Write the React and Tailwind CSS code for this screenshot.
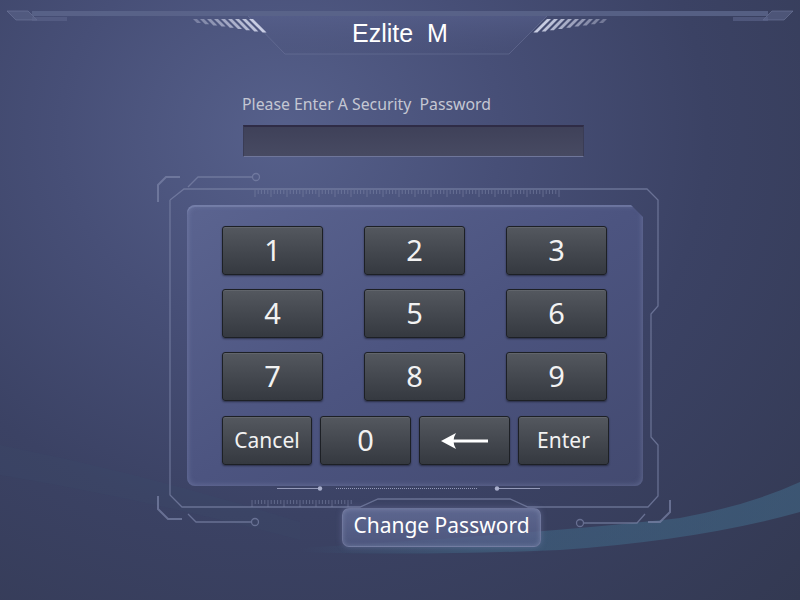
import React from 'react';

const digits = ['1', '2', '3', '4', '5', '6', '7', '8', '9'];

function Key({ children, className = '' }) {
    return (
        <button
            className={`flex items-center justify-center rounded-[3px] border border-[#1d2025] bg-gradient-to-b from-[#54585f] to-[#353940] text-[#f2f2f2] shadow-[0_1px_2px_rgba(0,0,0,0.45),inset_0_1px_0_rgba(255,255,255,0.08)] ${className}`}
        >
            {children}
        </button>
    );
}

function ArrowLeft() {
    return (
        <svg width="48" height="16" viewBox="0 0 48 16">
            <path d="M10 8 H47" stroke="#fff" strokeWidth="3" />
            <path d="M0 8 L15 0 Q10 8 15 16 Z" fill="#fff" />
        </svg>
    );
}

function Ticks({ x, y, count, step = 3.2 }) {
    const out = [];
    for (let i = 0; i < count; i++) {
        const big = i % 5 === 0;
        out.push(
            <line
                key={i}
                x1={x + i * step}
                x2={x + i * step}
                y1={y}
                y2={y + (big ? 7 : 4)}
                stroke="#8088aa"
                strokeOpacity="0.55"
                strokeWidth="1"
            />
        );
    }
    return <g>{out}</g>;
}

function Decorations() {
    const line = '#7c84a8';
    const hatch = [];
    for (let y = 330; y < 421; y += 3) {
        hatch.push(<line key={y} x1="638" y1={y + 2} x2="642" y2={y} stroke="#c8cce0" strokeWidth="1.2" />);
    }
    const stripesL = [];
    const stripesR = [];
    for (let i = 0; i < 9; i++) {
        const h = 4 + i * 1.2;
        const x = 193 + i * 7;
        const op = 0.35 + i * 0.07;
        stripesL.push(
            <polygon key={i} points={`${x},19 ${x + 4},19 ${x + 4 + h},${19 + h} ${x + h},${19 + h}`} fill="#d4d8ec" fillOpacity={op} />
        );
        const xr = 607 - i * 7;
        stripesR.push(
            <polygon key={i} points={`${xr},19 ${xr - 4},19 ${xr - 4 - h},${19 + h} ${xr - h},${19 + h}`} fill="#d4d8ec" fillOpacity={op} />
        );
    }
    return (
        <svg className="absolute inset-0" width="800" height="600" viewBox="0 0 800 600">
            <defs>
                <linearGradient id="cap" x1="0" y1="0" x2="0" y2="1">
                    <stop offset="0" stopColor="#5a6390" stopOpacity="0.55" />
                    <stop offset="1" stopColor="#4a5279" stopOpacity="0.25" />
                </linearGradient>
                <linearGradient id="wave" x1="0" y1="0" x2="1" y2="0">
                    <stop offset="0" stopColor="#3f6d8a" stopOpacity="0" />
                    <stop offset="0.35" stopColor="#3f6d8a" stopOpacity="0.45" />
                    <stop offset="1" stopColor="#43708f" stopOpacity="0.5" />
                </linearGradient>
            </defs>

            {/* header */}
            <polygon points="7,11 28,11 37,20 16,20" fill="#5b6489" fillOpacity="0.6" stroke="#7a82a6" strokeOpacity="0.5" />
            <polygon points="793,11 772,11 763,20 784,20" fill="#5b6489" fillOpacity="0.6" stroke="#7a82a6" strokeOpacity="0.5" />
            <rect x="32" y="11" width="736" height="5" fill="#5d668c" fillOpacity="0.8" />
            <rect x="32" y="17" width="35" height="4" fill="#5d668c" fillOpacity="0.6" />
            <rect x="733" y="17" width="35" height="4" fill="#5d668c" fillOpacity="0.6" />
            <polygon points="248,16 285,54 509,54 547,16" fill="url(#cap)" />
            <polyline points="248,16 285,54 509,54 547,16" fill="none" stroke="#7a82a8" strokeOpacity="0.4" />
            {stripesL}
            {stripesR}

            {/* wave */}
            <path d="M300 548 Q 560 532 680 518 Q 750 505 800 482 L 800 512 Q 700 540 560 550 Q 420 556 300 552 Z" fill="url(#wave)" />
            <path d="M0 445 Q 150 475 300 522 L 300 540 Q 150 500 0 475 Z" fill="#3f6d8a" fillOpacity="0.05" />

            {/* keypad frame */}
            <g fill="none" stroke={line} strokeOpacity="0.7" strokeWidth="1.3">
                <polyline points="158,202 158,185 166,177 180,177" strokeWidth="2" />
                <polyline points="188,187 198,177 252,177" />
                <circle cx="256" cy="177" r="3.5" />
                <polyline points="170,200 184,189 647,189 658,200 658,306 651,314 651,437 658,445 658,496 648,507 528,507 510,499 378,499 360,507 182,507 170,495 170,200" />
                <polyline points="158,496 158,509 168,519 182,519" strokeWidth="2" />
                <polyline points="188,514 196,522 251,522" />
                <circle cx="255" cy="522" r="3.5" />
                <polyline points="670,500 670,512 660,522 648,522" strokeWidth="2" />
                <polyline points="584,523 637,523 645,514" />
                <circle cx="580" cy="523" r="3.5" />
            </g>
            <Ticks x={255} y={190} count={96} />
            <Ticks x={252} y={500} count={32} />

            {/* under-panel line */}
            <g stroke="#a3a9c8" strokeOpacity="0.85">
                <line x1="277" y1="488.5" x2="318" y2="488.5" />
                <line x1="336" y1="488.5" x2="478" y2="488.5" strokeDasharray="1 1" />
                <line x1="499" y1="488.5" x2="540" y2="488.5" />
            </g>
            <circle cx="320" cy="488.5" r="2.2" fill="#a9afcc" />
            <circle cx="497" cy="488.5" r="2.2" fill="#a9afcc" />

            {/* right bar */}
            <rect x="638" y="318" width="4" height="12" fill="#c8cce0" fillOpacity="0.9" />
            {hatch}
            <rect x="638" y="421" width="4" height="12" fill="#c8cce0" fillOpacity="0.9" />
        </svg>
    );
}

export default function App() {
    return (
        <div className="relative w-[800px] h-[600px] overflow-hidden bg-[radial-gradient(ellipse_at_35%_22%,#56608b_0%,#474f77_30%,#3b4264_58%,#333952_100%)] font-['Noto_Sans',sans-serif]">
            <Decorations />

            <div className="relative flex flex-col">
                {/* 타이틀 */}
                <h1 className="h-[56px] pt-[19px] text-center text-[25px] leading-[28px] text-white whitespace-pre font-['Liberation_Sans',Arial,sans-serif]">
                    Ezlite  M
                </h1>

                <p className="ml-[242px] mt-[37px] text-[15.8px] leading-[22px] text-[#c4c7d3] whitespace-pre">
                    Please Enter A Security  Password
                </p>

                <div className="ml-[243px] mt-[10px] w-[341px] h-[32px] bg-gradient-to-b from-[#3f4159] to-[#474a62] border-t-2 border-t-[#2f2c46] border-b border-b-[#6f769a] border-x border-x-[#3a3c55]" />

                {/* 키패드 */}
                <div className="ml-[187px] mt-[48px] w-[456px] h-[281px] rounded-[8px] bg-gradient-to-br from-[#5b6490] via-[#4c5480] to-[#434a70] shadow-[inset_0_0_6px_rgba(170,180,220,0.35),inset_0_2px_0_rgba(150,160,200,0.3)] [clip-path:polygon(0_0,calc(100%-12px)_0,100%_12px,100%_100%,0_100%)] pt-[21px] pl-[35px]">
                    <div className="grid grid-cols-[101px_101px_101px] auto-rows-[49px] gap-x-[41px] gap-y-[14px]">
                        {digits.map((d) => (
                            <Key key={d} className="text-[29px] pb-[2px]">
                                {d}
                            </Key>
                        ))}
                    </div>
                    <div className="mt-[15px] flex gap-[8px] h-[49px]">
                        <Key className="w-[90px] text-[21px]">Cancel</Key>
                        <Key className="w-[91px] text-[29px] pb-[2px]">0</Key>
                        <Key className="w-[91px]">
                            <ArrowLeft />
                        </Key>
                        <Key className="w-[91px] text-[21px]">Enter</Key>
                    </div>
                </div>

                <button className="ml-[342px] mt-[22px] w-[199px] h-[39px] pb-[4px] rounded-[7px] bg-gradient-to-b from-[#66709a]/80 to-[#56608a]/70 border border-[#8990b4]/50 shadow-[0_0_6px_rgba(140,150,200,0.35),inset_0_0_5px_rgba(200,210,240,0.25)] text-[21px] leading-none text-white">
                    Change Password
                </button>
            </div>
        </div>
    );
}
